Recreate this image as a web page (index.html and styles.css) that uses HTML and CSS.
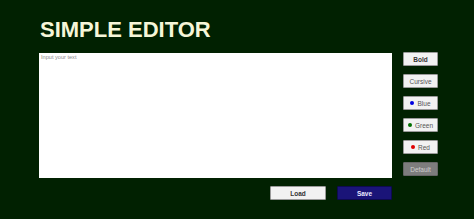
FILE: index.html
```html
<!DOCTYPE html>
<html>
<head>
    <title>Simple Editor</title>
    <link rel="stylesheet" href="styles.css">
</head>
<body>
    <div class="page">
        <h1>SIMPLE EDITOR</h1>
        <div class="editor-row">
            <textarea id="editor" placeholder="Input your text"></textarea>
            <div class="tools">
                <button class="tool bold">Bold</button>
                <button class="tool">Cursive</button>
                <button class="tool"><span class="dot blue"></span>Blue</button>
                <button class="tool"><span class="dot green"></span>Green</button>
                <button class="tool"><span class="dot red"></span>Red</button>
                <button class="tool default">Default</button>
            </div>
        </div>
        <div class="actions">
            <button class="action load">Load</button>
            <button class="action save">Save</button>
        </div>
    </div>
</body>
</html>
```
FILE: styles.css
```css
body { margin: 0; background: #012101; font-family: 'Liberation Sans', Arial, sans-serif; }
.page { padding-left: 39px; width: 400px; }
h1 {
    margin: 0 0 12px 1px;
    padding-top: 19px;
    font-size: 22px;
    line-height: 22px;
    font-weight: bold;
    color: #f6f6d8;
}
.editor-row { display: flex; gap: 11px; align-items: flex-start; }
textarea {
    width: 353px;
    height: 125px;
    box-sizing: border-box;
    margin: 0;
    padding: 1px 2px;
    border: none;
    background: #fff;
    resize: none;
    font-family: 'Liberation Sans', Arial, sans-serif;
    font-size: 5.6px;
    color: #333;
}
textarea::placeholder { color: #8a8a8a; }
.tools { display: flex; flex-direction: column; gap: 8px; margin-top: -1px; }
button {
    font-family: 'Liberation Sans', Arial, sans-serif;
    cursor: pointer;
    box-sizing: border-box;
    display: flex;
    align-items: center;
    justify-content: center;
    gap: 3px;
    padding: 0;
}
.tool {
    width: 35px;
    height: 14px;
    font-size: 6.5px;
    background: #f2f2f2;
    color: #555;
    border: 1px solid #9a9a9a;
    border-radius: 1px;
}
.tool.bold { font-weight: bold; color: #333; }
.tool.default { background: #7d7d7d; color: #cfcfcf; border-color: #666; }
.dot { width: 4px; height: 4px; border-radius: 50%; display: inline-block; }
.dot.blue { background: #0000e0; }
.dot.green { background: #007000; }
.dot.red { background: #e00000; }
.actions { display: flex; justify-content: flex-end; gap: 11px; margin-top: 8px; width: 353px; }
.action {
    width: 56px;
    height: 14px;
    font-size: 6.5px;
    font-weight: bold;
    border-radius: 1px;
}
.action.load { background: #f2f2f2; color: #333; border: 1px solid #9a9a9a; }
.action.save { width: 55px; background: #1a1478; color: #e8e8ff; border: 1px solid #0e0a50; }
```
